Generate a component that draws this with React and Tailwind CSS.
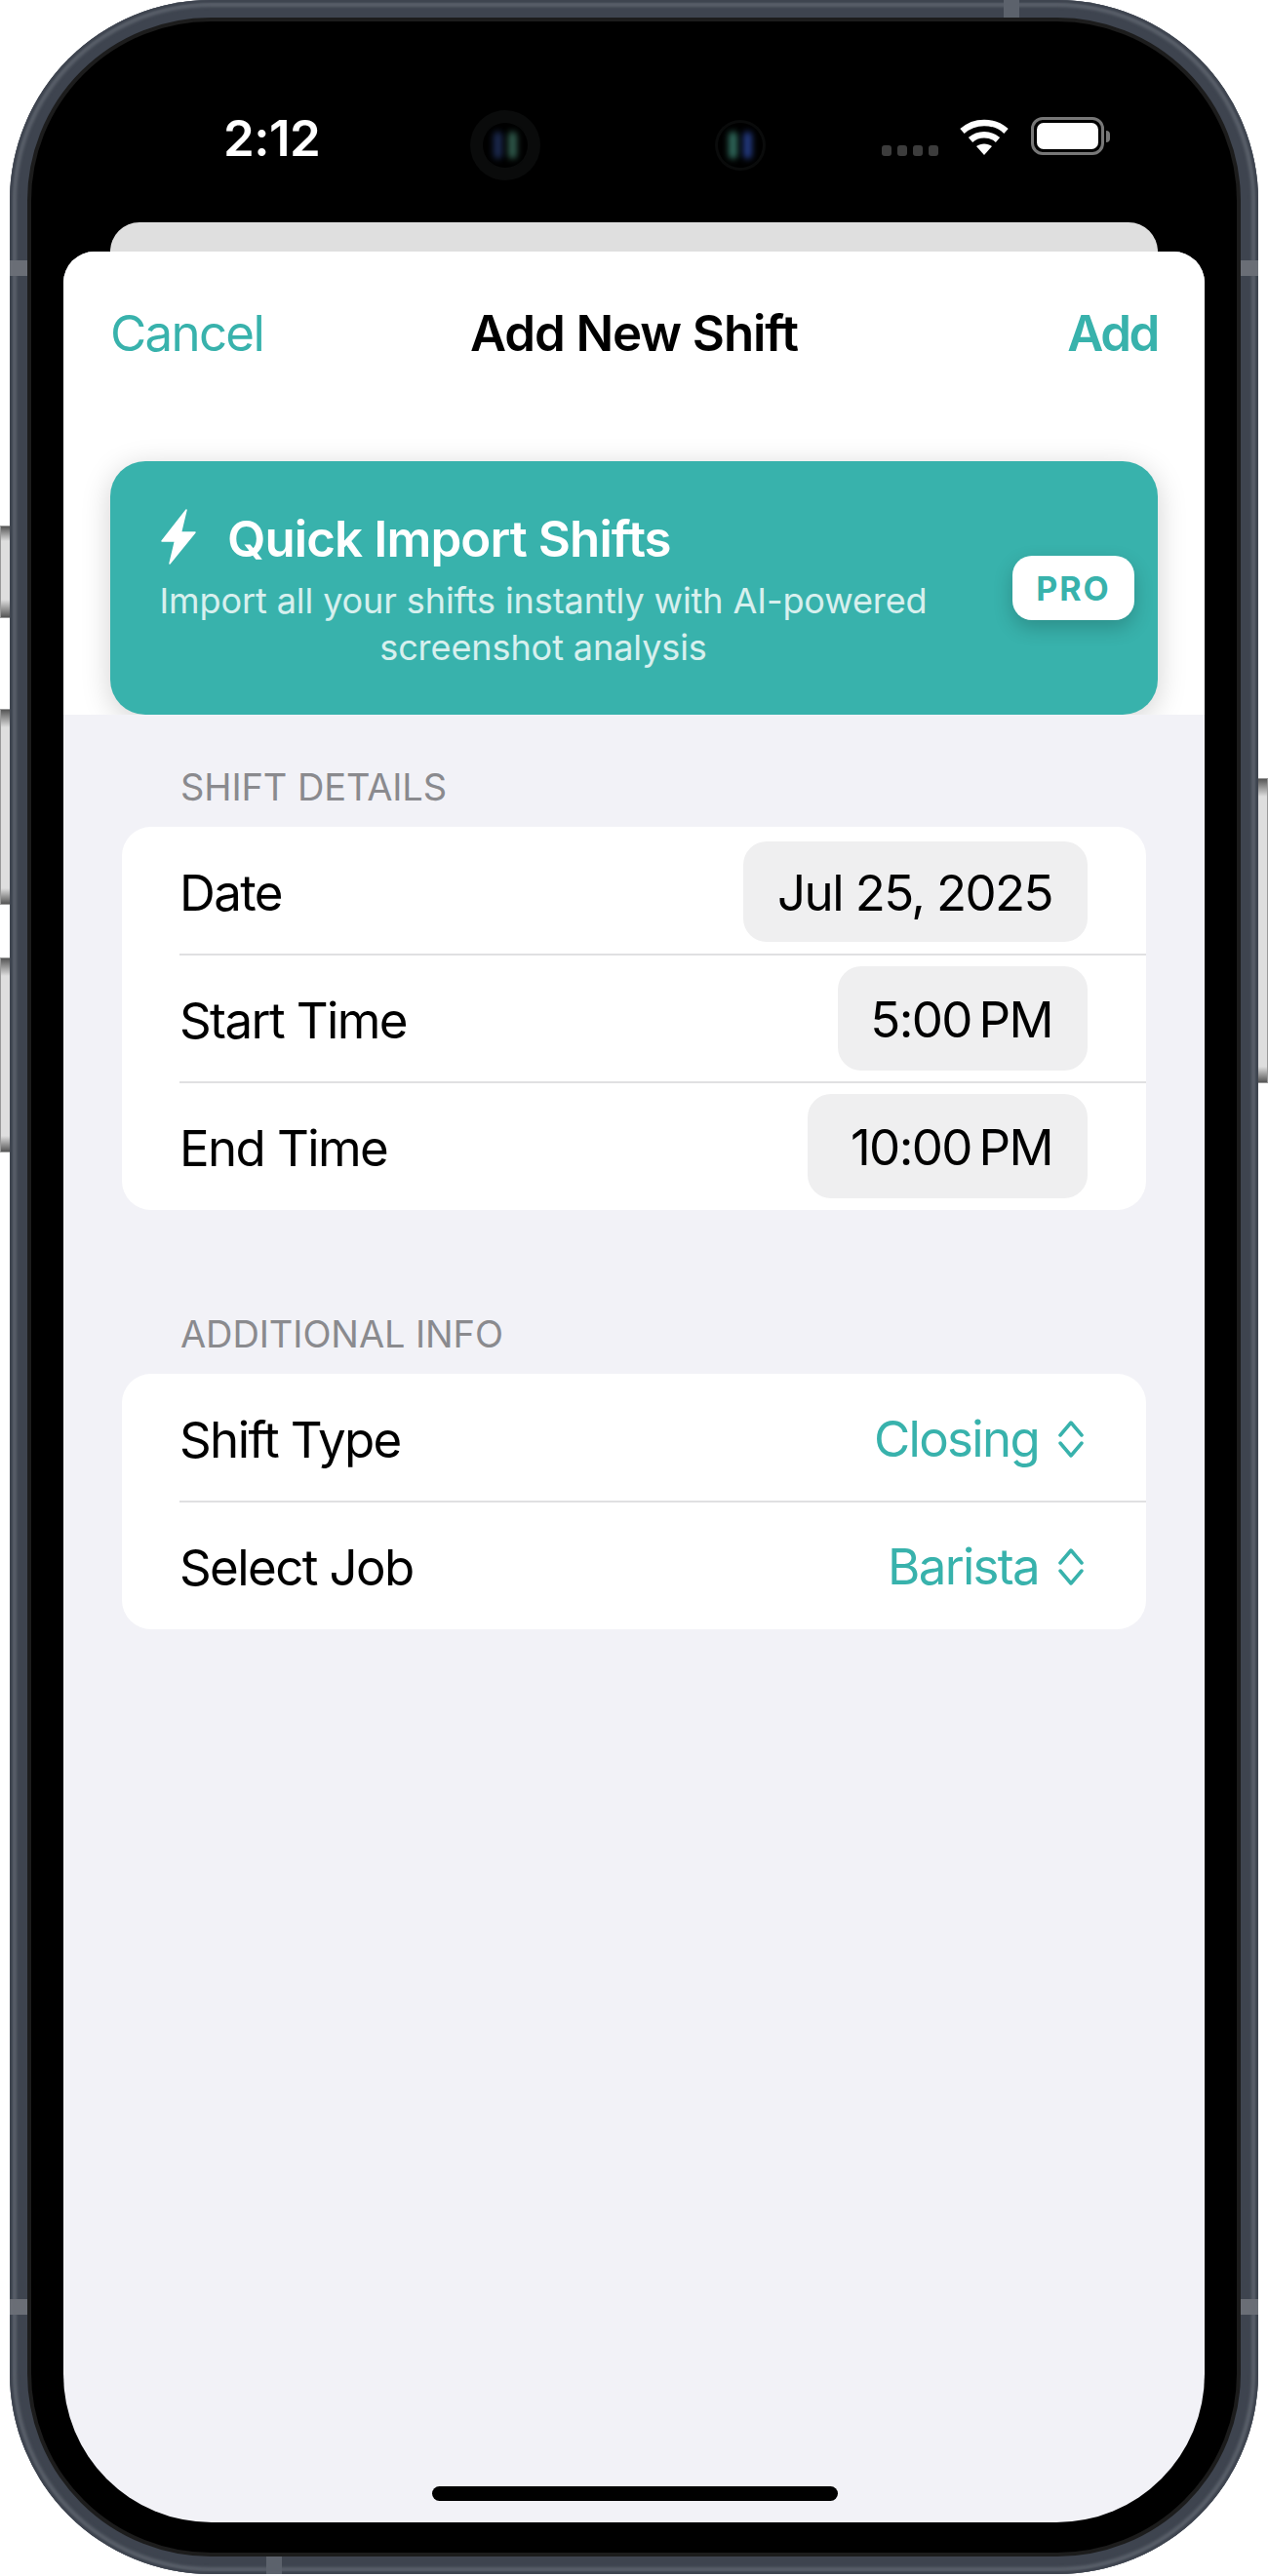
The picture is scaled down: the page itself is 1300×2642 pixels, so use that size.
import React from "react";

const font = { fontFamily: "Inter, 'Liberation Sans', sans-serif" };

function Chevrons() {
    return (
        <svg width="26" height="38" viewBox="0 0 26 38" fill="none" stroke="#38b2ac" strokeWidth="3.5" strokeLinecap="round" strokeLinejoin="round">
            <path d="M2 15 L13 2 L24 15" />
            <path d="M2 23 L13 36 L24 23" />
        </svg>
    );
}

function Bolt() {
    return (
        <svg className="ml-[3px] mb-[5px]" width="36" height="57" viewBox="0 0 36 57" fill="#ffffff" stroke="#ffffff" strokeWidth="1.5" strokeLinejoin="round">
            <path d="M26 1 L1 33 L14.5 33 L9 56 L35 24 L20.5 24 Z" />
        </svg>
    );
}

function Wifi() {
    return (
        <svg width="50" height="38" viewBox="0 0 50 38" fill="none">
            <path d="M2.5 13.5 C15 2 35 2 47.5 13.5" stroke="#fff" strokeWidth="6.5" />
            <path d="M11 22.5 C19 15.5 31 15.5 39 22.5" stroke="#fff" strokeWidth="6.5" />
            <path d="M17 29 C21.5 25.5 28.5 25.5 33 29 L25 38 Z" fill="#fff" />
        </svg>
    );
}

function Battery() {
    return (
        <div className="flex items-center gap-[2px]">
            <div className="w-[75px] h-[39px] rounded-[12px] border-[3px] border-[#777777] p-[3px]">
                <div className="w-full h-full rounded-[7px] bg-white" />
            </div>
            <div className="w-[4px] h-[12px] rounded-r-full bg-[#777777]" />
        </div>
    );
}

function Lens({ outer, inner, left, right }) {
    return (
        <div className={`${outer} rounded-full bg-[#0a0b0b] flex items-center justify-center`}>
            <div className={`${inner} rounded-full bg-black flex items-center justify-center gap-[6px]`}>
                <div className={`w-[9px] h-[28px] rounded-full blur-[3px] ${left}`} />
                <div className={`w-[9px] h-[28px] rounded-full blur-[3px] ${right}`} />
            </div>
        </div>
    );
}

function Row({ label, children, divider }) {
    return (
        <div className="relative h-[131px] pl-[59px] pr-[60px] flex items-center justify-between">
            <span className="mt-[5px] text-[51px] text-black tracking-[-1.6px]">{label}</span>
            {children}
            {divider && <div className="absolute left-[59px] right-0 bottom-[-1px] h-[2px] bg-[#e0e0e2]" />}
        </div>
    );
}

function Pill({ w, h, text, extra }) {
    return (
        <div className={`${w} ${h} ${extra} rounded-[24px] bg-[#efeff0] flex items-center justify-end pr-[36px]`}>
            <span className="mt-[3px] text-[51px] text-black tracking-[-1.6px] whitespace-nowrap">{text}</span>
        </div>
    );
}

function Picker({ text }) {
    return (
        <div className="mt-[3px] flex items-center gap-[20px] pr-[4px]">
            <span className="text-[51px] text-[#38b2ac] tracking-[-1.7px]">{text}</span>
            <Chevrons />
        </div>
    );
}

export default function App() {
    return (
        <div className="relative w-[1300px] h-[2642px] bg-white overflow-hidden" style={font}>
            {/* side buttons */}
            <div className="absolute left-0 top-[539px] w-[10px] h-[95px] border border-r-0 border-[#999999] bg-[linear-gradient(#555555,#dedede_15px,#dedede_75px,#555555)]" />
            <div className="absolute left-0 top-[727px] w-[10px] h-[201px] border border-r-0 border-[#999999] bg-[linear-gradient(#555555,#dedede_18px,#dedede_183px,#555555)]" />
            <div className="absolute left-0 top-[982px] w-[10px] h-[200px] border border-r-0 border-[#999999] bg-[linear-gradient(#555555,#dedede_18px,#dedede_182px,#555555)]" />
            <div className="absolute left-[1290px] top-[798px] w-[10px] h-[313px] border border-l-0 border-[#999999] bg-[linear-gradient(#555555,#dedede_18px,#dedede_295px,#555555)]" />

            <div className="relative ml-[10px] w-[1280px] h-[2640px] rounded-[206px] bg-[#3e444f] p-[18px] shadow-[inset_0_0_2px_3px_#3e444f,inset_0_0_3px_7px_#5a606a]">
                {/* antenna bands */}
                <div className="absolute left-0 top-[267px] w-[18px] h-[16px] bg-[#6a6e76]" />
                <div className="absolute right-0 top-[267px] w-[18px] h-[16px] bg-[#6a6e76]" />
                <div className="absolute left-0 top-[2358px] w-[18px] h-[16px] bg-[#6a6e76]" />
                <div className="absolute right-0 top-[2358px] w-[18px] h-[16px] bg-[#6a6e76]" />
                <div className="absolute left-[1019px] top-0 w-[16px] h-[18px] bg-[#5c626c]" />
                <div className="absolute left-[263px] bottom-0 w-[16px] h-[18px] bg-[#5c626c]" />

                <div className="w-full h-full rounded-[188px] bg-black border-[4px] border-[#1c1c1c] px-[33px] pb-[31px] flex flex-col">
                    {/* status bar */}
                    <div className="h-[206px] shrink-0 relative">
                        <span className="absolute left-[164px] top-[90px] text-[51px] leading-[60px] font-semibold text-white tracking-[-0.5px]">2:12</span>
                        <div className="absolute left-[417px] top-[91px]">
                            <Lens outer="w-[72px] h-[72px]" inner="w-[46px] h-[46px]" left="bg-[#1b2a50]" right="bg-[#2f5a4c]" />
                        </div>
                        <div className="absolute left-[668px] top-[101px]">
                            <Lens outer="w-[52px] h-[52px]" inner="w-[46px] h-[46px]" left="bg-[#2f6a5c]" right="bg-[#233a80]" />
                        </div>
                        <div className="absolute left-[839px] top-[99px] flex items-end gap-[6px] h-[39px]">
                            {[0, 1, 2, 3].map((i) => (
                                <div key={i} className="w-[10px] h-[11px] rounded-[3px] bg-[#3c3c3c]" />
                            ))}
                        </div>
                        <div className="absolute left-[919px] top-[99px]">
                            <Wifi />
                        </div>
                        <div className="absolute left-[992px] top-[98px]">
                            <Battery />
                        </div>
                    </div>

                    <div className="h-[30px] shrink-0 mx-[48px] rounded-t-[32px] bg-[#dfdfdf]" />

                    {/* sheet */}
                    <div className="flex-1 rounded-t-[32px] rounded-b-[152px] bg-[#f2f2f7] overflow-hidden">
                        <div className="h-[475px] bg-white px-[48px] overflow-hidden">
                            <div className="h-[168px] relative flex items-center justify-between">
                                <span className="text-[51px] text-[#38b2ac] tracking-[-1.7px]">Cancel</span>
                                <span className="absolute inset-x-0 text-center text-[51px] font-semibold text-black tracking-[-1.1px]">Add New Shift</span>
                                <span className="text-[51px] font-semibold text-[#38b2ac] tracking-[-2.4px]">Add</span>
                            </div>
                            <div className="mt-[47px] h-[260px] rounded-[36px] bg-[#38b2ac] pl-[49px] pr-[24px] flex items-center justify-between shadow-[0_6px_30px_rgba(0,0,0,0.18)]">
                                <div className="w-[790px] mb-[3px]">
                                    <div className="flex items-center gap-[32px]">
                                        <Bolt />
                                        <span className="text-[51px] font-semibold text-white tracking-[-0.9px]">Quick Import Shifts</span>
                                    </div>
                                    <p className="mt-[1px] text-center text-[36px] leading-[48px] text-white/80 tracking-[-0.08px]">
                                        Import all your shifts instantly with AI-powered
                                        <br />
                                        screenshot analysis
                                    </p>
                                </div>
                                <div className="w-[125px] h-[66px] rounded-[20px] bg-white flex items-center justify-center shadow-[0_8px_20px_rgba(0,0,0,0.2)]">
                                    <span className="text-[34px] font-bold text-[#38b2ac] tracking-[2px]">PRO</span>
                                </div>
                            </div>
                        </div>

                        <div className="px-[60px]">
                            <p className="mt-[48px] pl-[60px] h-[67px] text-[38px] leading-[52px] text-[#8a8a8e] tracking-[-0.1px]">SHIFT DETAILS</p>
                            <div className="rounded-[30px] bg-white overflow-hidden">
                                <Row label="Date" divider>
                                    <Pill w="w-[353px]" h="h-[103px]" extra="mt-[2px]" text="Jul 25, 2025" />
                                </Row>
                                <Row label="Start Time" divider>
                                    <Pill w="w-[256px]" h="h-[107px]" text={"5:00\u202FPM"} />
                                </Row>
                                <Row label="End Time">
                                    <Pill w="w-[287px]" h="h-[107px]" text={"10:00\u202FPM"} />
                                </Row>
                            </div>

                            <p className="mt-[101px] pl-[60px] h-[67px] text-[38px] leading-[52px] text-[#8a8a8e] tracking-[-0.1px]">ADDITIONAL INFO</p>
                            <div className="rounded-[30px] bg-white overflow-hidden">
                                <Row label="Shift Type" divider>
                                    <Picker text="Closing" />
                                </Row>
                                <Row label="Select Job">
                                    <Picker text="Barista" />
                                </Row>
                            </div>
                        </div>
                    </div>
                </div>

                {/* home indicator */}
                <div className="absolute left-[433px] top-[2550px] w-[416px] h-[15px] rounded-full bg-black" />
            </div>
        </div>
    );
}
